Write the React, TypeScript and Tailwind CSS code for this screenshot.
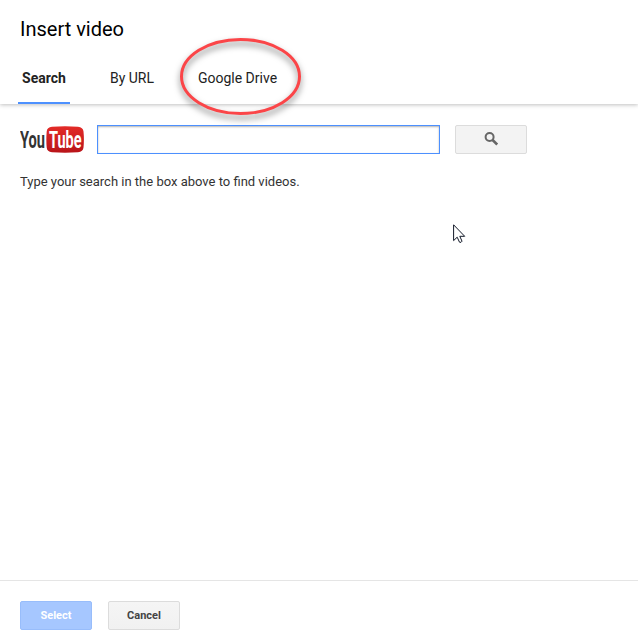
import { useState } from "react"

const tabs = [
  { name: "Search", className: "ml-[18px] w-[52px] font-bold" },
  { name: "By URL", className: "ml-9 w-[52px]" },
  { name: "Google Drive", className: "ml-9 w-[87px]" },
]

const YouTubeLogo = () => (
  <svg
    width="64"
    height="28"
    viewBox="0 0 64 28"
    className="shrink-0 font-[Roboto,sans-serif] font-bold"
  >
    <defs>
      <linearGradient id="tube" x1="0" y1="0" x2="0" y2="1">
        <stop offset="0" stopColor="#e32b28" />
        <stop offset="1" stopColor="#b91419" />
      </linearGradient>
    </defs>
    <path
      d="M32 .7Q45 0 58 .7Q63 1.1 63.5 5.5Q64.3 13.5 63.5 21.5Q63 25.8 58 26.3Q45 27.1 32 26.3Q27 25.8 26.7 21.5Q26 13.5 26.7 5.5Q27 1.1 32 .7Z"
      fill="url(#tube)"
    />
    <text transform="translate(0 22) scale(.61 1)" fontSize="24" fill="#333">
      You
    </text>
    <text transform="translate(29 22) scale(.605 1)" fontSize="24" fill="#fff">
      Tube
    </text>
  </svg>
)

const SearchIcon = () => (
  <svg width="14" height="14" viewBox="0 0 14 14" fill="none" stroke="#666">
    <circle cx="5.6" cy="5" r="4" strokeWidth="2" />
    <path d="M8.6 8L13.2 12.6" strokeWidth="2.6" />
  </svg>
)

const Highlight = () => (
  <svg
    width="136"
    height="94"
    viewBox="0 0 136 94"
    fill="none"
    className="pointer-events-none absolute left-[172px] top-[32px] drop-shadow-[0px_4px_3px_rgba(0,0,0,0.5)]"
  >
    <ellipse
      cx="68.5"
      cy="44.5"
      rx="59"
      ry="37"
      stroke="#fb4548"
      strokeWidth="3"
    />
  </svg>
)

const Cursor = () => (
  <svg
    width="13"
    height="20"
    viewBox="0 0 13 20"
    className="pointer-events-none absolute left-[453px] top-[224px]"
  >
    <path
      d="M.6 .8V16.6L4.2 13.2L6.5 18.2Q8.2 19 9 17.2L6.8 12.3H11.7Z"
      fill="#fff"
      stroke="#111827"
      strokeWidth="1"
    />
  </svg>
)

const App = () => {
  const [active, setActive] = useState("Search")
  const [query, setQuery] = useState("")

  return (
    <div className="relative flex h-[644px] w-[638px] flex-col overflow-hidden bg-white font-[Roboto,sans-serif] text-[#333]">
      <header className="flex h-[104px] shrink-0 flex-col justify-between shadow-[0_1px_4px_rgba(0,0,0,0.25)]">
        <h1 className="pl-5 pt-[14px] text-[20px] leading-[30px] text-black">
          Insert video
        </h1>
        <nav className="flex h-[52px]">
          {tabs.map((tab) => (
            <button
              key={tab.name}
              onClick={() => setActive(tab.name)}
              className={`${tab.className} whitespace-nowrap border-b-2 pt-[2px] text-center text-[14px] leading-[48px] text-[#222] ${
                active === tab.name ? "border-[#4d90fe]" : "border-transparent"
              }`}
            >
              {tab.name}
            </button>
          ))}
        </nav>
      </header>

      <main className="flex-1 px-5 pt-[21px]">
        <div className="flex h-[29px] items-center">
          <YouTubeLogo />
          <input
            value={query}
            onChange={(e) => setQuery(e.target.value)}
            className="ml-[13px] h-[29px] w-[343px] border border-[#4d90fe] px-2 text-[13px] shadow-[inset_0_1px_2px_rgba(0,0,0,0.3)] outline-none"
          />
          <button
            aria-label="Search"
            className="ml-[15px] flex h-[29px] w-[72px] items-center justify-center rounded-[2px] border border-[#dcdcdc] bg-[#f3f3f3] pb-[2px]"
          >
            <SearchIcon />
          </button>
        </div>
        <p className="mt-[18px] text-[13px] leading-5">
          Type your search in the box above to find videos.
        </p>
      </main>

      <footer className="flex h-16 shrink-0 gap-4 border-t border-[#e5e5e5] px-5 pt-5 text-[11px] font-bold">
        <button className="h-[29px] w-[72px] rounded-[2px] border border-[#98bdfb] bg-[#a6c7ff] pt-[2px] text-white">
          Select
        </button>
        <button className="h-[29px] w-[72px] rounded-[2px] border border-[#dcdcdc] bg-linear-to-b from-[#f5f5f5] to-[#f1f1f1] pt-[2px] text-[#444]">
          Cancel
        </button>
      </footer>

      <Highlight />
      <Cursor />
    </div>
  )
}

export default App
